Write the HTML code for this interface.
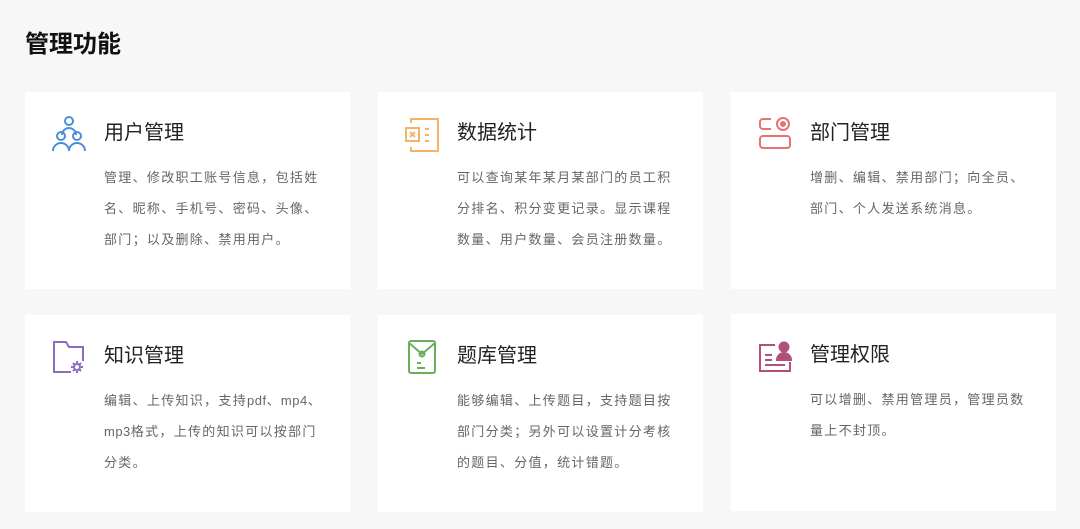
<!DOCTYPE html>
<html><head><meta charset="utf-8"><style>
*{margin:0;padding:0;box-sizing:border-box}
body{width:1080px;height:529px;background:#f7f7f7;font-family:"Liberation Sans","Noto Sans CJK SC",sans-serif;position:relative;overflow:hidden}
h1{position:absolute;left:25px;top:29px;font-size:24px;font-weight:bold;color:#111;line-height:32px}
.c{position:absolute;width:325px;height:197px;background:#fff}
.c svg{position:absolute;left:26px;top:24px}
.t{position:absolute;left:79px;top:27px;font-size:20px;color:#222;line-height:28px}
.d{position:absolute;left:79px;top:70px;width:240px;white-space:nowrap;font-size:13px;letter-spacing:1.3px;color:#666;line-height:31px}
.d .l{letter-spacing:0.5px}
</style></head><body>
<h1>管理功能</h1>
<div class="c" style="left:25px;top:92px">
<svg width="36" height="36" viewBox="0 0 36 36" fill="none" stroke="#4a8fd6" stroke-width="2"><circle cx="18" cy="5" r="4"/><path d="M11 19a7 7 0 0 1 14 0"/><circle cx="10" cy="20" r="4"/><circle cx="26" cy="20" r="4"/><path d="M2 35a8 8 0 0 1 16 0M18 35a8 8 0 0 1 16 0"/></svg>
<div class="t">用户管理</div><div class="d">管理、修改职工账号信息，包括姓<br>名、昵称、手机号、密码、头像、<br>部门；以及删除、禁用用户。</div></div>
<div class="c" style="left:378px;top:92px">
<svg width="36" height="36" viewBox="0 0 36 36" fill="none" stroke="#f5b26b" stroke-width="2"><path d="M7 7V3h27v32H7v-4"/><rect x="2" y="12" width="13" height="13"/><path d="M6 16l5 5M11 16l-5 5M21 13h4M21 19h4M21 25h4"/></svg>
<div class="t">数据统计</div><div class="d">可以查询某年某月某部门的员工积<br>分排名、积分变更记录。显示课程<br>数量、用户数量、会员注册数量。</div></div>
<div class="c" style="left:731px;top:92px">
<svg width="36" height="36" viewBox="0 0 36 36" fill="none" stroke="#e57373" stroke-width="2"><path d="M14 3H6a3 3 0 0 0-3 3v4a3 3 0 0 0 3 3h8"/><circle cx="26" cy="8" r="6"/><circle cx="26" cy="8" r="2" fill="#e57373"/><rect x="3" y="20" width="30" height="12" rx="3"/></svg>
<div class="t">部门管理</div><div class="d">增删、编辑、禁用部门；向全员、<br>部门、个人发送系统消息。</div></div>
<div class="c" style="left:25px;top:315px">
<svg width="36" height="36" viewBox="0 0 36 36" fill="none" stroke="#8a6cc4" stroke-width="2"><path d="M20 33H3V3h12l3 5h14v14"/><circle cx="26" cy="28" r="3"/><path d="M26 22v2M26 32v2M20 28h2M30 28h2M22 24l1.5 1.5M28.5 30.5L30 32M22 32l1.5-1.5M28.5 25.5L30 24"/></svg>
<div class="t">知识管理</div><div class="d">编辑、上传知识，支持<span class="l">pdf</span>、<span class="l">mp4</span>、<br><span class="l">mp3</span>格式，上传的知识可以按部门<br>分类。</div></div>
<div class="c" style="left:378px;top:315px">
<svg width="36" height="36" viewBox="0 0 36 36" fill="none" stroke="#6aae5a" stroke-width="2"><rect x="5" y="2" width="26" height="32" rx="2"/><path d="M5 4l13 11 13-11"/><circle cx="18" cy="15" r="2.5"/><path d="M13 24h4M13 29h8"/></svg>
<div class="t">题库管理</div><div class="d">能够编辑、上传题目，支持题目按<br>部门分类；另外可以设置计分考核<br>的题目、分值，统计错题。</div></div>
<div class="c" style="left:731px;top:314px">
<svg width="36" height="36" viewBox="0 0 36 36" fill="none" stroke="#b34f7c" stroke-width="2"><path d="M18 7H3v26h30V24"/><path d="M8 17h7M8 22h7M8 27h20"/><circle cx="27" cy="9" r="4.5" fill="#b34f7c"/><path d="M20 22a7 7 0 0 1 14 0z" fill="#b34f7c"/></svg>
<div class="t">管理权限</div><div class="d">可以增删、禁用管理员，管理员数<br>量上不封顶。</div></div>
</body></html>
